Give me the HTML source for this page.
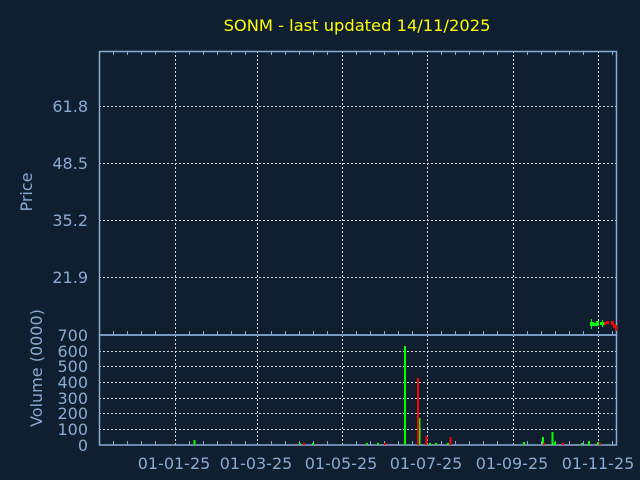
<!DOCTYPE html>
<html><head><style>
body{margin:0;background:#0f1f2f;}
svg{display:block}
text{font-family:"DejaVu Sans",sans-serif;}
</style></head><body>
<svg width="640" height="480" viewBox="0 0 640 480">
<rect width="640" height="480" fill="#0f1f2f"/>
<text x="357" y="31" fill="#ffff00" font-size="16.3" text-anchor="middle">SONM - last updated 14/11/2025</text>
<g stroke="#d8d8d8" stroke-width="1" stroke-dasharray="2,2">
<line x1="99" y1="106.5" x2="617" y2="106.5"/>
<line x1="99" y1="163.5" x2="617" y2="163.5"/>
<line x1="99" y1="220.5" x2="617" y2="220.5"/>
<line x1="99" y1="277.5" x2="617" y2="277.5"/>
<line x1="99" y1="351.5" x2="617" y2="351.5"/>
<line x1="99" y1="366.5" x2="617" y2="366.5"/>
<line x1="99" y1="382.5" x2="617" y2="382.5"/>
<line x1="99" y1="398.5" x2="617" y2="398.5"/>
<line x1="99" y1="413.5" x2="617" y2="413.5"/>
<line x1="99" y1="429.5" x2="617" y2="429.5"/>
<line x1="175.5" y1="51" x2="175.5" y2="445"/>
<line x1="257.5" y1="51" x2="257.5" y2="445"/>
<line x1="342.5" y1="51" x2="342.5" y2="445"/>
<line x1="427.5" y1="51" x2="427.5" y2="445"/>
<line x1="513.5" y1="51" x2="513.5" y2="445"/>
<line x1="598.5" y1="51" x2="598.5" y2="445"/>
</g>
<g fill="none" stroke="#8aaad4" stroke-width="1.5">
<rect x="99.5" y="51.5" width="517" height="283.5"/>
<rect x="99.5" y="335" width="517" height="110"/>
</g>
<g stroke="#8aaad4" stroke-width="1">
<path d="M113.5 51v4M127.5 51v4M141.5 51v4M155.5 51v4M189.5 51v4M203.5 51v4M217.5 51v4M231.5 51v4M245.5 51v4M271.5 51v4M285.5 51v4M299.5 51v4M313.5 51v4M327.5 51v4M356.5 51v4M370.5 51v4M384.5 51v4M398.5 51v4M412.5 51v4M441.5 51v4M455.5 51v4M469.5 51v4M483.5 51v4M497.5 51v4M527.5 51v4M541.5 51v4M555.5 51v4M569.5 51v4M583.5 51v4M612.5 51v4"/>
<path d="M113.5 335v-4M127.5 335v-4M141.5 335v-4M155.5 335v-4M189.5 335v-4M203.5 335v-4M217.5 335v-4M231.5 335v-4M245.5 335v-4M271.5 335v-4M285.5 335v-4M299.5 335v-4M313.5 335v-4M327.5 335v-4M356.5 335v-4M370.5 335v-4M384.5 335v-4M398.5 335v-4M412.5 335v-4M441.5 335v-4M455.5 335v-4M469.5 335v-4M483.5 335v-4M497.5 335v-4M527.5 335v-4M541.5 335v-4M555.5 335v-4M569.5 335v-4M583.5 335v-4M612.5 335v-4"/>
<path d="M113.5 445v-4M127.5 445v-4M141.5 445v-4M155.5 445v-4M189.5 445v-4M203.5 445v-4M217.5 445v-4M231.5 445v-4M245.5 445v-4M271.5 445v-4M285.5 445v-4M299.5 445v-4M313.5 445v-4M327.5 445v-4M356.5 445v-4M370.5 445v-4M384.5 445v-4M398.5 445v-4M412.5 445v-4M441.5 445v-4M455.5 445v-4M469.5 445v-4M483.5 445v-4M497.5 445v-4M527.5 445v-4M541.5 445v-4M555.5 445v-4M569.5 445v-4M583.5 445v-4M612.5 445v-4"/>
</g>
<g fill="#8aaad4" font-size="16">
<text x="88" y="112" text-anchor="end">61.8</text>
<text x="88" y="169" text-anchor="end">48.5</text>
<text x="88" y="226" text-anchor="end">35.2</text>
<text x="88" y="283" text-anchor="end">21.9</text>
<text x="88" y="341" text-anchor="end">700</text>
<text x="88" y="357" text-anchor="end">600</text>
<text x="88" y="372" text-anchor="end">500</text>
<text x="88" y="388" text-anchor="end">400</text>
<text x="88" y="404" text-anchor="end">300</text>
<text x="88" y="419" text-anchor="end">200</text>
<text x="88" y="435" text-anchor="end">100</text>
<text x="88" y="451" text-anchor="end">0</text>
<text transform="translate(32,192) rotate(-90)" text-anchor="middle">Price</text>
<text transform="translate(42,368) rotate(-90)" text-anchor="middle">Volume (0000)</text>
<text x="174" y="469" text-anchor="middle">01-01-25</text>
<text x="256" y="469" text-anchor="middle">01-03-25</text>
<text x="341" y="469" text-anchor="middle">01-05-25</text>
<text x="426" y="469" text-anchor="middle">01-07-25</text>
<text x="512" y="469" text-anchor="middle">01-09-25</text>
<text x="598" y="469" text-anchor="middle">01-11-25</text>
</g>
<g stroke-width="2">
<path stroke="#00ff00" d="M405 445V346M419.5 445V418M194.5 445V440M524 445V442M543 445V437M552.5 445V432M555 445V442M589 445V441M582 445V443M598 445V442M430 445V443M436 445V443M448 445V443M367 445V443M378 445V443M300 445V443M313 445V443"/>
<path stroke="#ff0000" d="M418 445V378M426.5 445V436M450.5 445V437M304 445V443M385 445V443M600 445V443M563 445V443M544 445V443"/>
</g>
<g>
<path stroke="#00ff00" d="M591.5 319v10M602.5 320v7" stroke-width="1"/>
<rect x="590" y="322" width="4" height="4" fill="#00ff00"/>
<rect x="593" y="323" width="3" height="3" fill="#00ff00"/>
<rect x="596" y="321" width="3" height="5" fill="#00ff00"/>
<rect x="600" y="322" width="4" height="3" fill="#00ff00"/>
<rect x="604" y="322" width="2" height="3" fill="#ff0000"/>
<rect x="606" y="321" width="3" height="3" fill="#ff0000"/>
<rect x="611" y="321" width="3" height="4" fill="#ff0000"/>
<rect x="613" y="324" width="2" height="4" fill="#ff0000"/>
<rect x="615" y="325" width="2" height="6" fill="#ff0000"/>
</g>
</svg>
</body></html>
